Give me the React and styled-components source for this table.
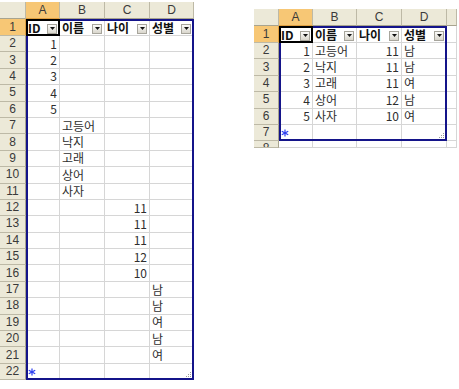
import React from 'react';
import styled, { createGlobalStyle } from 'styled-components';

const GRID = '#d6d6d6';
const HEAD_BG = '#ece9d8';
const HEAD_LINE = '#bdb9a6';
const ACTIVE_BG = '#f7c775';
const LIST_BLUE = '#14148a';
const CJK = '"Noto Sans CJK KR", "Liberation Sans", sans-serif';

const GlobalStyle = createGlobalStyle`
  html, body { margin: 0; padding: 0; background: #fff; }
  body { font-family: "Liberation Sans", Arial, sans-serif; }
`;

const Page = styled.div`
  display: flex;
  align-items: flex-start;
  width: 459px;
  height: 389px;
  overflow: hidden;
`;

const Sheet = styled.div`
  display: grid;
  grid-template-columns: ${(p) => p.$cols};
  grid-template-rows: ${(p) => p.$rows};
  margin-top: ${(p) => p.$top}px;
  margin-left: ${(p) => p.$left}px;
  overflow: hidden;
`;

const Place = styled.div`
  grid-row: ${(p) => p.$r};
  grid-column: ${(p) => p.$c};
  box-sizing: border-box;
  min-width: 0;
  min-height: 0;
`;

const Corner = styled(Place)`
  background: ${HEAD_BG};
  border-right: 1px solid ${HEAD_LINE};
  border-bottom: 1px solid #a8a48f;
`;

const ColHead = styled(Place)`
  background: ${(p) => (p.$active ? ACTIVE_BG : HEAD_BG)};
  border-right: 1px solid ${HEAD_LINE};
  border-bottom: 1px solid ${(p) => (p.$active ? '#e0a040' : '#a8a48f')};
  display: flex;
  align-items: center;
  justify-content: center;
  font-size: 12px;
  color: #3a3a3a;
`;

const RowHead = styled(Place)`
  background: ${(p) => (p.$active ? ACTIVE_BG : HEAD_BG)};
  border-right: 1px solid ${(p) => (p.$active ? '#e0a040' : '#a8a48f')};
  border-bottom: 1px solid ${HEAD_LINE};
  display: flex;
  align-items: ${(p) => (p.$clipped ? 'flex-start' : 'center')};
  justify-content: center;
  font-size: 12px;
  line-height: 15px;
  color: #3a3a3a;
  overflow: hidden;
`;

const Cell = styled(Place)`
  border-right: 1px solid ${GRID};
  border-bottom: 1px solid ${GRID};
  display: flex;
  align-items: center;
  justify-content: ${(p) => (p.$align === 'right' ? 'flex-end' : 'flex-start')};
  padding: 0 2px 0 2px;
  font-family: ${CJK};
  font-size: 12px;
  line-height: 1;
  color: #2e2e2e;
  white-space: nowrap;
  overflow: hidden;
`;

const HeaderCell = styled(Place)`
  border-right: 1px solid ${GRID};
  border-bottom: 1px solid ${GRID};
  display: flex;
  align-items: center;
  justify-content: space-between;
  padding: 0 2px 0 2px;
  font-family: ${CJK};
  font-size: 12px;
  font-weight: 700;
  color: #111;
  white-space: nowrap;
  overflow: hidden;
`;

const DropButton = styled.span`
  flex: none;
  width: 10px;
  height: 10px;
  margin-top: 3px;
  box-sizing: border-box;
  border: 1px solid #a7a59c;
  background: linear-gradient(#fbfbfa, #d9d6cc);
  display: flex;
  align-items: center;
  justify-content: center;
`;

const ListFrame = styled(Place)`
  border: 2px solid ${LIST_BLUE};
  display: flex;
  align-items: flex-end;
  justify-content: flex-end;
  pointer-events: none;
`;

const Selection = styled(Place)`
  border: 2px solid #000;
  pointer-events: none;
`;

const Arrow = () => (
  <DropButton>
    <svg width="5" height="3" viewBox="0 0 5 3">
      <path d="M0 0 H5 L2.5 3 Z" fill="#111" />
    </svg>
  </DropButton>
);

const Star = () => (
  <svg width="8" height="8" viewBox="0 0 8 8">
    <g stroke="#2a3cf0" strokeWidth="1.2">
      <line x1="4" y1="0.5" x2="4" y2="7.5" />
      <line x1="0.8" y1="2.2" x2="7.2" y2="5.8" />
      <line x1="0.8" y1="5.8" x2="7.2" y2="2.2" />
    </g>
  </svg>
);

const Grip = () => (
  <svg width="6" height="6" viewBox="0 0 6 6">
    <g fill="#9a9a9a">
      <rect x="4" y="0" width="1" height="1" />
      <rect x="2" y="2" width="1" height="1" />
      <rect x="4" y="2" width="1" height="1" />
      <rect x="0" y="4" width="1" height="1" />
      <rect x="2" y="4" width="1" height="1" />
      <rect x="4" y="4" width="1" height="1" />
    </g>
  </svg>
);

const HEADERS = ['ID', '이름', '나이', '성별'];
const LETTERS = ['A', 'B', 'C', 'D'];
const ALIGN = ['right', 'left', 'right', 'left'];

function SheetView({ cols, rows, top, left, data, rowCount, extraCol, partialRow }) {
  const items = [];
  const totalCols = LETTERS.length + (extraCol ? 1 : 0);
  items.push(<Corner key="corner" $r={1} $c={1} />);
  LETTERS.forEach((l, i) => (
    items.push(<ColHead key={'h' + l} $r={1} $c={i + 2} $active={i === 0}>{l}</ColHead>)
  ));
  if (extraCol) items.push(<ColHead key="hE" $r={1} $c={6} />);

  items.push(<RowHead key="r1" $r={2} $c={1} $active>1</RowHead>);
  HEADERS.forEach((h, i) => (
    items.push(
      <HeaderCell key={'hc' + i} $r={2} $c={i + 2}>
        <span>{h}</span>
        <Arrow />
      </HeaderCell>
    )
  ));
  if (extraCol) items.push(<Cell key="r1e" $r={2} $c={6} />);

  for (let n = 2; n <= rowCount; n++) {
    const gr = n + 1;
    items.push(<RowHead key={'r' + n} $r={gr} $c={1}>{n}</RowHead>);
    const row = data[n] || [];
    const isLast = n === rowCount;
    for (let i = 0; i < 4; i++) {
      const v = row[i];
      const star = isLast && i === 0;
      items.push(
        <Cell key={`c${n}-${i}`} $r={gr} $c={i + 2} $align={star ? 'left' : ALIGN[i]}>
          {star ? <Star /> : v}
        </Cell>
      );
    }
    if (extraCol) items.push(<Cell key={`c${n}-e`} $r={gr} $c={6} />);
  }
  if (partialRow) {
    const gr = rowCount + 2;
    items.push(<RowHead key="rp" $r={gr} $c={1} $clipped>{rowCount + 1}</RowHead>);
    for (let i = 0; i < totalCols; i++) {
      items.push(<Cell key={`p${i}`} $r={gr} $c={i + 2} />);
    }
  }
  items.push(
    <ListFrame key="frame" $r={`2 / ${rowCount + 2}`} $c="2 / 6">
      <Grip />
    </ListFrame>
  );
  items.push(<Selection key="sel" $r={2} $c={2} />);

  return (
    <Sheet $cols={cols} $rows={rows} $top={top} $left={left}>
      {items}
    </Sheet>
  );
}

const leftData = {
  2: ['1'], 3: ['2'], 4: ['3'], 5: ['4'], 6: ['5'],
  7: [null, '고등어'], 8: [null, '낙지'], 9: [null, '고래'], 10: [null, '상어'], 11: [null, '사자'],
  12: [null, null, '11'], 13: [null, null, '11'], 14: [null, null, '11'], 15: [null, null, '12'], 16: [null, null, '10'],
  17: [null, null, null, '남'], 18: [null, null, null, '남'], 19: [null, null, null, '여'],
  20: [null, null, null, '남'], 21: [null, null, null, '여'],
};

const rightData = {
  2: ['1', '고등어', '11', '남'],
  3: ['2', '낙지', '11', '남'],
  4: ['3', '고래', '11', '여'],
  5: ['4', '상어', '12', '남'],
  6: ['5', '사자', '10', '여'],
};

export default function App() {
  return (
    <>
      <GlobalStyle />
      <Page>
        <SheetView
          cols="26px 34px 45px 45px 44px"
          rows="17px 17px repeat(21, 16.4px)"
          top={2}
          left={0}
          data={leftData}
          rowCount={22}
        />
        <SheetView
          cols="25px 34px 44px 45px 45px 10px"
          rows="17px 17px repeat(6, 16.4px) 7px"
          top={9}
          left={60}
          data={rightData}
          rowCount={7}
          extraCol
          partialRow
        />
      </Page>
    </>
  );
}
